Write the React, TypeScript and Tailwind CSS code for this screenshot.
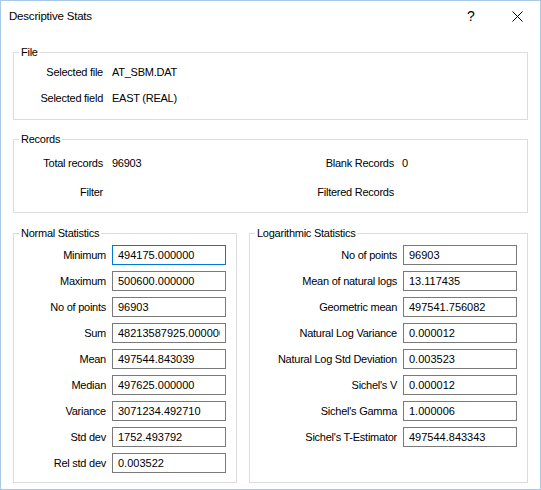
import type { ReactNode } from 'react'

const normalStats: [string, string][] = [
  ['Minimum', '494175.000000'],
  ['Maximum', '500600.000000'],
  ['No of points', '96903'],
  ['Sum', '48213587925.000000'],
  ['Mean', '497544.843039'],
  ['Median', '497625.000000'],
  ['Variance', '3071234.492710'],
  ['Std dev', '1752.493792'],
  ['Rel std dev', '0.003522'],
]

const logStats: [string, string][] = [
  ['No of points', '96903'],
  ['Mean of natural logs', '13.117435'],
  ['Geometric mean', '497541.756082'],
  ['Natural Log Variance', '0.000012'],
  ['Natural Log Std Deviation', '0.003523'],
  ["Sichel's V", '0.000012'],
  ["Sichel's Gamma", '1.000006'],
  ["Sichel's T-Estimator", '497544.843343'],
]

function Group({ title, className, children }: { title: string; className?: string; children: ReactNode }) {
  return (
    <fieldset className={`border border-[#dcdcdc] m-0 p-0 min-w-0 ${className ?? ''}`}>
      <legend className="ml-[5px] px-[2px] leading-[14px]">{title}</legend>
      {children}
    </fieldset>
  )
}

function StatRow({ label, value, labelWidth, focused }: { label: string; value: string; labelWidth: string; focused?: boolean }) {
  return (
    <div className="flex items-center h-[20px]">
      <span className={`${labelWidth} text-right whitespace-nowrap`}>{label}</span>
      <input
        readOnly
        value={value}
        className={`ml-[6px] w-[114px] h-[20px] border px-[5px] bg-white outline-none text-[11px] tracking-normal font-['Liberation_Sans',Arial,sans-serif] ${focused ? 'border-[#0078d7]' : 'border-[#7a7a7a]'}`}
      />
    </div>
  )
}

export default function App() {
  return (
    <div className="w-[541px] h-[490px] border border-[#a8c9e8] bg-white text-black text-[11px] tracking-[-0.25px] font-['Liberation_Sans',Arial,sans-serif] overflow-hidden">
      {/* Title bar */}
      <div className="flex items-center h-[31px]">
        <span className="pl-[8px] text-[11.5px] tracking-[-0.2px]">Descriptive Stats</span>
        <div className="ml-auto flex h-full">
          <div className="w-[46px] flex items-center justify-center text-[14px] tracking-normal">?</div>
          <div className="w-[46px] flex items-center justify-center">
            <svg width="11" height="11" viewBox="0 0 11 11">
              <path d="M0.5 0.5 L10.5 10.5 M10.5 0.5 L0.5 10.5" stroke="#000" strokeWidth="1" />
            </svg>
          </div>
        </div>
      </div>

      <div className="px-[12px] pt-[13px]">
        <Group title="File">
          <div className="pb-[8px]">
            <div className="flex items-center h-[26px]">
              <span className="w-[89px] text-right">Selected file</span>
              <span className="pl-[9px]">AT_SBM.DAT</span>
            </div>
            <div className="flex items-center h-[26px]">
              <span className="w-[89px] text-right">Selected field</span>
              <span className="pl-[9px]">EAST (REAL)</span>
            </div>
          </div>
        </Group>

        <Group title="Records" className="mt-[12px]">
          <div className="pt-[3px] pb-[5px] grid grid-cols-[89px_180px_111px_1fr] auto-rows-[29px] items-center">
            <span className="text-right">Total records</span>
            <span className="pl-[9px]">96903</span>
            <span className="text-right">Blank Records</span>
            <span className="pl-[8px]">0</span>
            <span className="text-right">Filter</span>
            <span />
            <span className="text-right">Filtered Records</span>
            <span />
          </div>
        </Group>

        <div className="flex gap-[12px] mt-[13px]">
          <Group title="Normal Statistics" className="w-[224px]">
            <div className="pt-[5px] pb-[9px] flex flex-col gap-[6px]">
              {normalStats.map(([label, value], i) => (
                <StatRow key={label} label={label} value={value} labelWidth="w-[92px]" focused={i === 0} />
              ))}
            </div>
          </Group>
          <Group title="Logarithmic Statistics" className="w-[279px]">
            <div className="pt-[5px] pb-[9px] flex flex-col gap-[6px]">
              {logStats.map(([label, value]) => (
                <StatRow key={label} label={label} value={value} labelWidth="w-[147px]" />
              ))}
            </div>
          </Group>
        </div>
      </div>
    </div>
  )
}
